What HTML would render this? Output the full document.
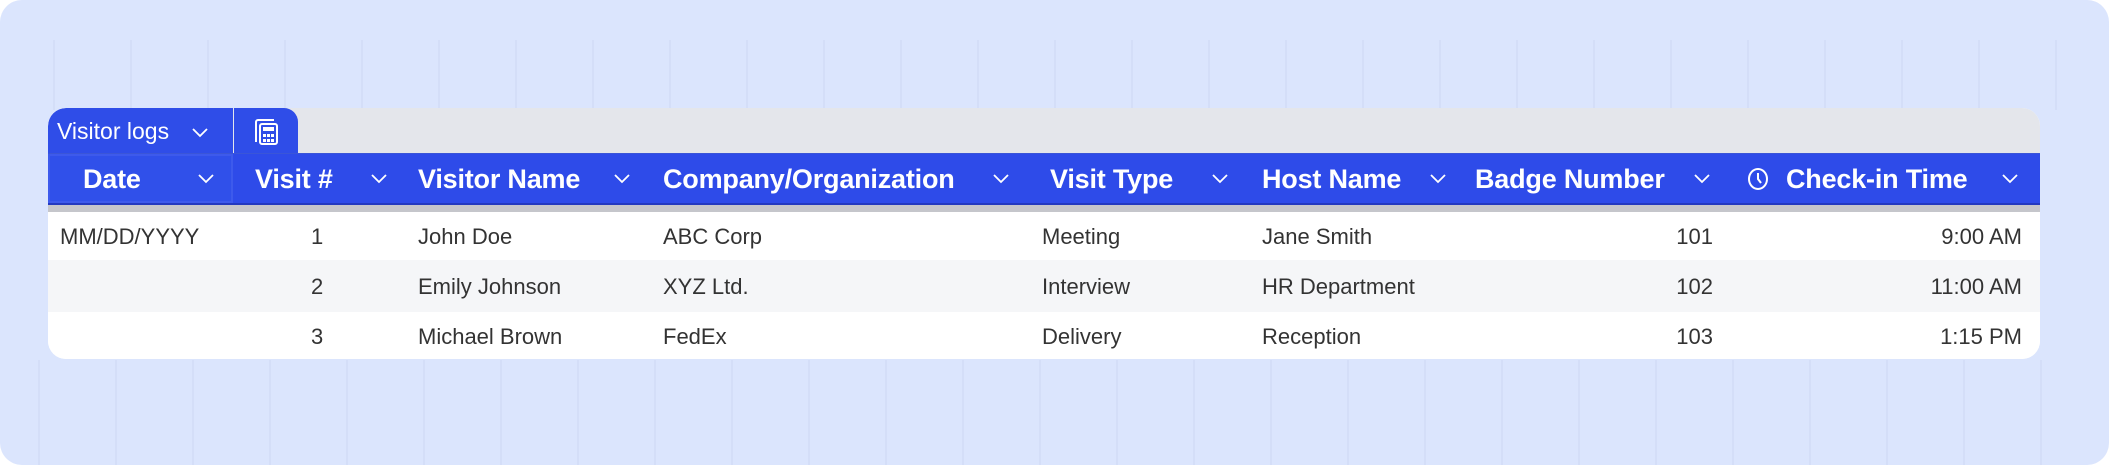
<!DOCTYPE html>
<html><head><style>
*{margin:0;padding:0;box-sizing:border-box}
html,body{width:2109px;height:465px;background:#fff;overflow:hidden}
.bg{position:absolute;left:0;top:0;width:2109px;height:465px;border-radius:22px;background:#dbe5fd;overflow:hidden}
.lines1{position:absolute;left:0;top:40px;width:2109px;height:70px;background:repeating-linear-gradient(90deg,transparent 0 53px,#d4def8 53px 55px,transparent 55px 77px)}
.lines2{position:absolute;left:0;top:360px;width:2109px;height:105px;background:repeating-linear-gradient(90deg,transparent 0 38px,#d4def8 38px 40px,transparent 40px 77px)}
.card{position:absolute;left:48px;top:108px;width:1992px;height:251px;border-radius:18px;background:#fff;overflow:hidden;font-family:"Liberation Sans",Arial,sans-serif}
.tabbar{position:absolute;left:0;top:0;width:100%;height:45px;background:#e4e6eb}
.tab1{position:absolute;left:0;top:0;width:185px;height:45px;background:#2f4de8;border-top-left-radius:18px;color:#fff;font-size:23px;padding:10px 0 0 9px}
.tab2{position:absolute;left:186px;top:0;width:64px;height:45px;background:#2f4de8;border-top-right-radius:14px}
.hdr{position:absolute;left:0;top:45px;width:100%;height:52px;background:#2e4be9;border-bottom:2px solid #2339c0;border-top:1px solid #3a55d8}
.dsel{position:absolute;left:0;top:0;width:185px;height:49px;border:2px solid #3d5aec;background:#3050ea}
.h{position:absolute;top:10px;color:#fff;font-weight:bold;font-size:27px;white-space:nowrap;letter-spacing:-0.2px}
.chev{position:absolute;top:19px}
.strip{position:absolute;left:0;top:97px;width:100%;height:7px;background:#c5c6cb}
.row{position:absolute;left:0;width:100%;color:#333;font-size:22px}
.c{position:absolute;top:0;white-space:nowrap}
</style></head><body>
<div class="bg"><div class="lines1"></div><div class="lines2"></div></div>
<div class="card">
 <div class="tabbar"></div>
 <div class="tab1">Visitor logs<svg style="position:absolute;left:143px;top:19px" width="18" height="11" viewBox="0 0 18 11"><path d="M2 2l7 7 7-7" stroke="#fff" stroke-width="1.8" fill="none"/></svg></div>
 <div class="tab2"><svg style="position:absolute;left:20px;top:10px" width="26" height="28" viewBox="0 0 26 28"><path d="M2 24V4a2 2 0 0 1 2-2h16" stroke="#fff" stroke-width="2" fill="none"/><rect x="6" y="6" width="17" height="20" rx="2" stroke="#fff" stroke-width="2" fill="none"/><rect x="9" y="9" width="11" height="4" fill="#fff"/><g fill="#fff"><rect x="9" y="16" width="3" height="3"/><rect x="13" y="16" width="3" height="3"/><rect x="17" y="16" width="3" height="3"/><rect x="9" y="21" width="3" height="3"/><rect x="13" y="21" width="3" height="3"/><rect x="17" y="21" width="3" height="3"/></g></svg></div>
 <div class="hdr">
  <div class="dsel"></div>
  <div class="h" style="left:35px">Date</div>
  <div class="h" style="left:207px">Visit #</div>
  <div class="h" style="left:370px">Visitor Name</div>
  <div class="h" style="left:615px">Company/Organization</div>
  <div class="h" style="left:1002px">Visit Type</div>
  <div class="h" style="left:1214px">Host Name</div>
  <div class="h" style="left:1427px">Badge Number</div>
  <svg style="position:absolute;left:1699px;top:13px" width="22" height="24" viewBox="0 0 22 24"><ellipse cx="11" cy="12" rx="9" ry="10" stroke="#fff" stroke-width="2" fill="none"/><path d="M11 6v6l3 4" stroke="#fff" stroke-width="2" fill="none"/></svg>
  <div class="h" style="left:1738px">Check-in Time</div>
  <svg class="chev" style="left:149px" width="18" height="11" viewBox="0 0 18 11"><path d="M2 2l7 7 7-7" stroke="#fff" stroke-width="1.8" fill="none"/></svg>
  <svg class="chev" style="left:322px" width="18" height="11" viewBox="0 0 18 11"><path d="M2 2l7 7 7-7" stroke="#fff" stroke-width="1.8" fill="none"/></svg>
  <svg class="chev" style="left:565px" width="18" height="11" viewBox="0 0 18 11"><path d="M2 2l7 7 7-7" stroke="#fff" stroke-width="1.8" fill="none"/></svg>
  <svg class="chev" style="left:944px" width="18" height="11" viewBox="0 0 18 11"><path d="M2 2l7 7 7-7" stroke="#fff" stroke-width="1.8" fill="none"/></svg>
  <svg class="chev" style="left:1163px" width="18" height="11" viewBox="0 0 18 11"><path d="M2 2l7 7 7-7" stroke="#fff" stroke-width="1.8" fill="none"/></svg>
  <svg class="chev" style="left:1381px" width="18" height="11" viewBox="0 0 18 11"><path d="M2 2l7 7 7-7" stroke="#fff" stroke-width="1.8" fill="none"/></svg>
  <svg class="chev" style="left:1645px" width="18" height="11" viewBox="0 0 18 11"><path d="M2 2l7 7 7-7" stroke="#fff" stroke-width="1.8" fill="none"/></svg>
  <svg class="chev" style="left:1953px" width="18" height="11" viewBox="0 0 18 11"><path d="M2 2l7 7 7-7" stroke="#fff" stroke-width="1.8" fill="none"/></svg>
 </div>
 <div class="strip"></div>
 <div class="row" style="top:104px;height:48px;background:#fff">
  <div class="c" style="left:12px;top:12px">MM/DD/YYYY</div><div class="c" style="left:263px;top:12px">1</div><div class="c" style="left:370px;top:12px">John Doe</div><div class="c" style="left:615px;top:12px">ABC Corp</div><div class="c" style="left:994px;top:12px">Meeting</div><div class="c" style="left:1214px;top:12px">Jane Smith</div><div class="c" style="right:327px;top:12px">101</div><div class="c" style="right:18px;top:12px">9:00 AM</div>
 </div>
 <div class="row" style="top:152px;height:52px;background:#f5f6f8">
  <div class="c" style="left:263px;top:14px">2</div><div class="c" style="left:370px;top:14px">Emily Johnson</div><div class="c" style="left:615px;top:14px">XYZ Ltd.</div><div class="c" style="left:994px;top:14px">Interview</div><div class="c" style="left:1214px;top:14px">HR Department</div><div class="c" style="right:327px;top:14px">102</div><div class="c" style="right:18px;top:14px">11:00 AM</div>
 </div>
 <div class="row" style="top:204px;height:47px;background:#fff">
  <div class="c" style="left:263px;top:12px">3</div><div class="c" style="left:370px;top:12px">Michael Brown</div><div class="c" style="left:615px;top:12px">FedEx</div><div class="c" style="left:994px;top:12px">Delivery</div><div class="c" style="left:1214px;top:12px">Reception</div><div class="c" style="right:327px;top:12px">103</div><div class="c" style="right:18px;top:12px">1:15 PM</div>
 </div>
</div>
</body></html>
